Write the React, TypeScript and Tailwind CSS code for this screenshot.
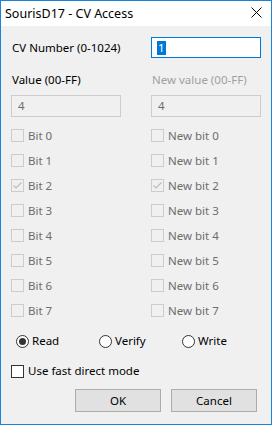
import { Fragment } from "react";

const font = { fontFamily: '"Segoe UI", "Noto Sans", "Open Sans", sans-serif' };

const bits = [0, 1, 2, 3, 4, 5, 6, 7];

const DisabledCheck = ({ checked, label }: { checked?: boolean; label: string }) => (
  <div className="flex items-center h-[25px]">
    <div className="w-[13px] h-[13px] border border-[#cccccc] bg-[#f0f0f0] flex items-center justify-center">
      {checked && (
        <svg width="11" height="11" viewBox="0 0 11 11">
          <path d="M1.5 5.5 L4 8 L9.5 2.5" fill="none" stroke="#bcbcbc" strokeWidth="1.2" />
        </svg>
      )}
    </div>
    <span className="ml-[4px] text-[#6d6d6d]">{label}</span>
  </div>
);

const Radio = ({ checked, label }: { checked?: boolean; label: string }) => (
  <div className="flex items-center w-[83px]">
    <div className="w-[13px] h-[13px] rounded-full border border-[#333333] bg-white flex items-center justify-center">
      {checked && <div className="w-[7px] h-[7px] rounded-full bg-[#333333]" />}
    </div>
    <span className="ml-[3px]">{label}</span>
  </div>
);

export default function App() {
  return (
    <div
      className="w-[272px] h-[425px] border border-[#1883d7] bg-[#f0f0f0] flex flex-col text-[11.5px] leading-[16px] text-black"
      style={font}
    >
      {/* title bar */}
      <div className="h-[25px] bg-white flex items-center justify-between pl-[4px] pr-[9px] text-[12.5px]">
        <span>SourisD17 - CV Access</span>
        <svg width="11" height="11" viewBox="0 0 11 11" className="mb-[3px]">
          <path d="M0.5 0.5 L10.5 10.5 M10.5 0.5 L0.5 10.5" stroke="#000" strokeWidth="1" />
        </svg>
      </div>

      <div className="pl-[10px] pt-[11px]">
        <div className="grid grid-cols-[140px_110px]">
          <div className="flex items-center h-[21px] pl-[1px]">CV Number (0-1024)</div>
          <div className="h-[21px] border border-[#0078d7] bg-white flex items-center pl-[5px]">
            <span className="bg-[#0078d7] text-white px-[1px] leading-[14px]">1</span>
          </div>

          <div className="mt-[14px] h-[16px] pl-[1px]">Value (00-FF)</div>
          <div className="mt-[14px] h-[16px] pl-[1px] text-[#a0a0a0]">New value (00-FF)</div>

          <div className="mt-[7px] w-[110px] h-[22px] border border-[#cccccc] bg-[#f0f0f0] flex items-center pl-[6px] text-[#6d6d6d]">4</div>
          <div className="mt-[7px] w-[110px] h-[22px] border border-[#cccccc] bg-[#f0f0f0] flex items-center pl-[6px] text-[#6d6d6d]">4</div>
        </div>

        <div className="grid grid-cols-[140px_110px] mt-[6px]">
          {bits.map((b) => (
            <Fragment key={b}>
              <DisabledCheck checked={b === 2} label={`Bit ${b}`} />
              <DisabledCheck checked={b === 2} label={`New bit ${b}`} />
            </Fragment>
          ))}
        </div>

        <div className="flex items-center h-[20px] mt-[8px] pl-[5px]">
          <Radio checked label="Read" />
          <Radio label="Verify" />
          <Radio label="Write" />
        </div>

        <div className="flex items-center h-[20px] mt-[10px]">
          <div className="w-[13px] h-[13px] border border-[#333333] bg-white" />
          <span className="ml-[4px]">Use fast direct mode</span>
        </div>

        <div className="flex justify-end gap-[10px] mt-[8px] pr-[14px]">
          <button className="w-[86px] h-[23px] bg-[#e1e1e1] border border-[#adadad]">OK</button>
          <button className="w-[86px] h-[23px] bg-[#e1e1e1] border border-[#adadad]">Cancel</button>
        </div>
      </div>
    </div>
  );
}
